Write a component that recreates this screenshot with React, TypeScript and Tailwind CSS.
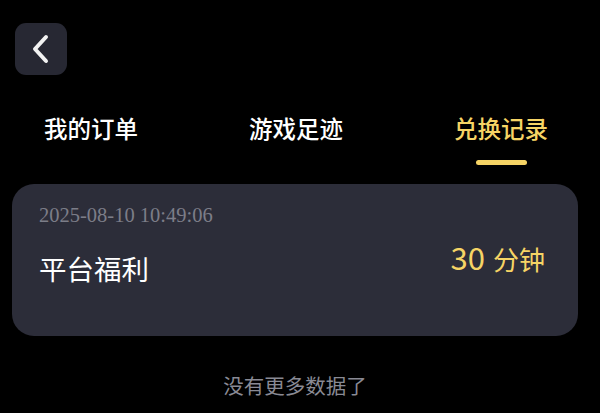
import React from 'react';

const tabs = ['我的订单', '游戏足迹', '兑换记录'];

export default function App() {
  const active = 2;
  return (
    <div className="w-[600px] h-[413px] bg-black overflow-hidden font-['Noto_Sans_CJK_SC',sans-serif]">
      <div className="pt-[23px] pl-[15px]">
        <button className="w-[52px] h-[52px] rounded-[11px] bg-[#272833] flex items-center justify-center">
          <svg width="22" height="30" viewBox="0 0 22 30" fill="none">
            <path d="M16 3 L5 15 L16 27" stroke="#f2f2f2" strokeWidth="4" strokeLinecap="round" strokeLinejoin="round" />
          </svg>
        </button>
      </div>

      <div className="flex gap-[111px] pl-[44px] mt-[40px]">
        {tabs.map((t, i) => (
          <div key={t} className="flex flex-col items-center">
            <span
              className={
                'text-[23.5px] leading-[26px] font-medium whitespace-nowrap ' +
                (i === active ? 'text-[#f6d465]' : 'text-white')
              }
            >
              {t}
            </span>
            <div
              className={
                'mt-[19px] w-[51px] h-[5px] rounded-full ' + (i === active ? 'bg-[#f6d465]' : 'bg-transparent')
              }
            />
          </div>
        ))}
      </div>

      <div className="ml-[12px] mr-[22px]">
        <div className="mt-[19px] h-[152px] rounded-[22px] bg-[#2c2d39] pl-[27px] pr-[33px] pt-[19px]">
          <div className="font-['Liberation_Serif',serif] text-[20.5px] leading-[24px] text-[#7c7d88]">
            2025-08-10 10:49:06
          </div>
          <div className="flex items-center justify-between mt-[12px]">
            <span className="text-[27.5px] leading-[36px] text-white mt-[11px]">平台福利</span>
            <span className="flex items-baseline text-[#f6d465] -mt-[10px]">
              <span className="text-[31px] leading-[36px]">30</span>
              <span className="ml-[8px] text-[26px] leading-[36px]">分钟</span>
            </span>
          </div>
        </div>

        <div className="text-center mt-[36px] text-[20.5px] leading-[26px] text-[#898a94]">没有更多数据了</div>
      </div>
    </div>
  );
}
